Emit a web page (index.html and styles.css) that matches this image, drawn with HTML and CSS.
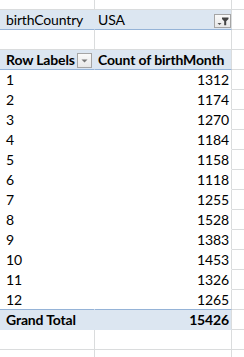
FILE: index.html
```html
<!DOCTYPE html>
<html>
<head>
<meta charset="utf-8">
<link rel="stylesheet" href="styles.css">
</head>
<body>
<div class="sheet">
  <div class="row top"><div class="c a"></div><div class="c b"></div><div class="c x"></div></div>

  <div class="row filter">
    <div class="c a">birthCountry</div>
    <div class="c b">USA
      <span class="btn fbtn"><svg width="15" height="12" viewBox="0 0 15 12"><path d="M7 2.5h6.5v1.5l-2.3 2.3v4h-2v-4L7 4z" fill="#444"/><path d="M2.5 8h4l-2 2z" fill="#555"/></svg></span>
    </div>
    <div class="c x"></div>
  </div>

  <div class="row"><div class="c a"></div><div class="c b"></div><div class="c x"></div></div>

  <div class="row head">
    <div class="c a bold">Row Labels
      <span class="btn dbtn"><svg width="13" height="13" viewBox="0 0 13 13"><path d="M3.5 5.5h6l-3 3z" fill="#777"/></svg></span>
    </div>
    <div class="c b bold">Count of birthMonth</div>
    <div class="c x"></div>
  </div>

  <div class="row data"><div class="c a">1</div><div class="c b num">1312</div><div class="c x"></div></div>
  <div class="row data"><div class="c a">2</div><div class="c b num">1174</div><div class="c x"></div></div>
  <div class="row data"><div class="c a">3</div><div class="c b num">1270</div><div class="c x"></div></div>
  <div class="row data"><div class="c a">4</div><div class="c b num">1184</div><div class="c x"></div></div>
  <div class="row data"><div class="c a">5</div><div class="c b num">1158</div><div class="c x"></div></div>
  <div class="row data"><div class="c a">6</div><div class="c b num">1118</div><div class="c x"></div></div>
  <div class="row data"><div class="c a">7</div><div class="c b num">1255</div><div class="c x"></div></div>
  <div class="row data"><div class="c a">8</div><div class="c b num">1528</div><div class="c x"></div></div>
  <div class="row data"><div class="c a">9</div><div class="c b num">1383</div><div class="c x"></div></div>
  <div class="row data"><div class="c a">10</div><div class="c b num">1453</div><div class="c x"></div></div>
  <div class="row data"><div class="c a">11</div><div class="c b num">1326</div><div class="c x"></div></div>
  <div class="row data last"><div class="c a">12</div><div class="c b num">1265</div><div class="c x"></div></div>

  <div class="row total">
    <div class="c a bold">Grand Total</div>
    <div class="c b num bold">15426</div>
    <div class="c x"></div>
  </div>

  <div class="row"><div class="c a"></div><div class="c b"></div><div class="c x"></div></div>
  <div class="row bottom"><div class="c a"></div><div class="c b"></div><div class="c x"></div></div>
</div>
</body>
</html>
```

FILE: styles.css
```css
html, body {
  margin: 0;
  padding: 0;
  background: #ffffff;
}

body {
  font-family: Lato, "Open Sans", sans-serif;
  font-size: 14px;
  letter-spacing: -0.15px;
  color: #000;
  overflow: hidden;
}

.sheet {
  width: 244px;
  display: flex;
  flex-direction: column;
}

.row {
  display: grid;
  grid-template-columns: 95px 137px 1fr;
  height: 20px;
}

.row.top { height: 10px; }
.row.bottom { height: 8px; }
.row.bottom .c { border-bottom: none; }

.c {
  box-sizing: border-box;
  border-right: 1px solid #dadcdd;
  border-bottom: 1px solid #dadcdd;
  display: flex;
  align-items: flex-end;
  padding-bottom: 1px;
  line-height: 17px;
  white-space: nowrap;
  position: relative;
}

.c.a { padding-left: 6px; }
.c.b { padding-left: 3px; }
.c.num { justify-content: flex-end; padding-right: 2px; }
.c.x { border-right: none; }

.bold { font-weight: 700; }

.filter .a, .filter .b,
.head .a, .head .b,
.total .a, .total .b {
  background: #dce6f1;
}

.filter .a, .filter .b { border-bottom-color: #95b3d7; }
.filter .a { border-right-color: #dce6f1; }

.head .a { border-right-color: #dce6f1; }
.head .a, .head .b { border-bottom-color: #95b3d7; }

.data .a { border-right-color: #ffffff; }
.data .a, .data .b { border-bottom-color: #ffffff; }
.data.last .a, .data.last .b { border-bottom-color: #95b3d7; }

.total .a { border-right-color: #dce6f1; }
.total .a, .total .b { border-bottom-color: #dce6f1; }

.btn {
  position: absolute;
  box-sizing: border-box;
  border: 1px solid #a5a5a5;
  background: linear-gradient(#fafafa, #e8e8e8);
  display: flex;
  align-items: center;
  justify-content: center;
}

.fbtn {
  left: 119px;
  top: 4px;
  width: 17px;
  height: 14px;
}

.dbtn {
  left: 77px;
  top: 3px;
  width: 15px;
  height: 15px;
}
```
